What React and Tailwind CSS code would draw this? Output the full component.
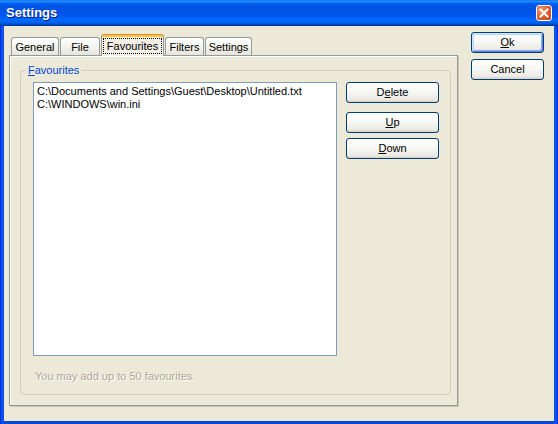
import React from 'react';

const FONT = "font-['Liberation_Sans','Noto_Sans',Arial,sans-serif]";

function XpButton({ children, isDefault }) {
  return (
    <button
      className={
        isDefault
          ? 'flex h-[21px] w-[73px] items-center justify-center rounded-[3px] border border-[#003c74] bg-[linear-gradient(180deg,#ffffff_0%,#f7f7f4_45%,#ecebe5_85%,#d8d2c6_100%)] text-[11px] leading-none text-black shadow-[inset_1px_1px_0_#cee7ff,inset_-1px_-1px_0_#6982ee,inset_2px_2px_0_#bcd4f6,inset_-2px_-2px_0_#89ade4]'
          : 'flex h-[21px] w-[73px] items-center justify-center rounded-[3px] border border-[#003c74] bg-[linear-gradient(180deg,#ffffff_0%,#f7f7f4_45%,#ecebe5_85%,#d8d2c6_100%)] text-[11px] leading-none text-black'
      }
    >
      {children}
    </button>
  );
}

function SideButton({ children }) {
  return (
    <button className="flex h-[21px] w-[93px] items-center justify-center rounded-[3px] border border-[#003c74] bg-[linear-gradient(180deg,#ffffff_0%,#f7f7f4_45%,#ecebe5_85%,#d8d2c6_100%)] text-[11px] leading-none text-black">
      {children}
    </button>
  );
}

function Tab({ label, width }) {
  return (
    <div
      className={`flex h-[18px] items-center justify-center rounded-t-[3px] border border-b-0 border-[#919b9c] bg-[linear-gradient(180deg,#ffffff_0%,#f5f4ef_50%,#e6e4da_100%)] pt-[1px] text-[11px] leading-none text-black ${width}`}
    >
      {label}
    </div>
  );
}

export default function App() {
  return (
    <div className={`${FONT} flex h-[424px] w-[558px] flex-col bg-[linear-gradient(90deg,#0019cf_0px,#0a5ffa_2px,#0847d8_4px,#0847d8_554px,#0a5ffa_556px,#0019cf_558px)] select-none`}>
      {/* title bar */}
      <div className="flex h-[26px] items-start justify-between bg-[linear-gradient(180deg,#0058ee_0%,#3593ff_4%,#288eff_6%,#127dff_8%,#036ffc_10%,#0262ee_14%,#0057e5_20%,#0054e3_24%,#0055eb_56%,#005bf5_66%,#026afe_76%,#0062ef_86%,#0052d6_92%,#0040ab_96%,#003092_100%)]">
        <div className="pl-[6px] pt-[6px] text-[13px] font-bold leading-[14px] text-white [text-shadow:1px_1px_#0a1883]">
          Settings
        </div>
        <div className="mr-[6px] mt-[5px] flex h-[16px] w-[16px] items-center justify-center rounded-[3px] border border-white bg-[radial-gradient(circle_at_30%_30%,#f0a080_0%,#e2602f_45%,#c3401b_100%)]">
          <svg width="10" height="10" viewBox="0 0 10 10">
            <path d="M1.5 1.5 L8.5 8.5 M8.5 1.5 L1.5 8.5" stroke="#fff" strokeWidth="2" strokeLinecap="square" />
          </svg>
        </div>
      </div>

      {/* client area */}
      <div className="mx-[4px] mb-[3px] flex flex-1 bg-[#ece9d8]">
        {/* tab control */}
        <div className="pl-[5px] pt-[8px]">
          <div className="flex h-[21px] items-end pl-[2px]">
            <Tab label="General" width="w-[48px]" />
            <div className="ml-[1px]">
              <Tab label="File" width="w-[40px]" />
            </div>
            <div className="relative z-10 -mb-[1px] ml-[1px] h-[22px] w-[63px] rounded-t-[3px] border border-b-0 border-[#919b9c] border-t-[#e68b2c] bg-[#f1efe6] px-[1px] pt-[3px] shadow-[inset_0_2px_0_#ffc73c]">
              <div className="flex h-[16px] items-center justify-center border border-dotted border-black text-[11px] leading-none text-black">
                Favourites
              </div>
            </div>
            <div className="ml-[1px]">
              <Tab label="Filters" width="w-[39px]" />
            </div>
            <div className="ml-[1px]">
              <Tab label="Settings" width="w-[47px]" />
            </div>
          </div>

          <div className="h-[351px] w-[449px] border border-[#919b9c] bg-[#ece9d8] pl-[10px] pt-[14px] shadow-[inset_1px_1px_0_#ffffff,1px_1px_0_#c9c6b6]">
            {/* group box */}
            <div className="relative h-[325px] w-[431px] rounded-[4px] border border-[#d0d0bf] pl-[12px] pt-[11px]">
              <div className="absolute -top-[7px] left-[5px] bg-[#ece9d8] px-[2px] text-[11px] leading-[13px] text-[#0046d5]">
                <span className="underline">F</span>avourites
              </div>
              <div className="flex items-start">
                <div className="h-[274px] w-[304px] border border-[#7f9db9] bg-white pl-[3px] pt-[2px] text-[11px] leading-[13px] text-black">
                  <div>C:\Documents and Settings\Guest\Desktop\Untitled.txt</div>
                  <div>C:\WINDOWS\win.ini</div>
                </div>
                <div className="ml-[9px] flex flex-col">
                  <SideButton>
                    D<span className="underline">e</span>lete
                  </SideButton>
                  <div className="mt-[9px]">
                    <SideButton>
                      <span className="underline">U</span>p
                    </SideButton>
                  </div>
                  <div className="mt-[5px]">
                    <SideButton>
                      <span className="underline">D</span>own
                    </SideButton>
                  </div>
                </div>
              </div>
              <div className="mt-[14px] pl-[2px] text-[11px] leading-[13px] text-[#aca899] [text-shadow:1px_1px_#ffffff]">
                You may add up to 50 favourites.
              </div>
            </div>
          </div>
        </div>

        {/* dialog buttons */}
        <div className="ml-[13px] flex flex-col gap-[6px] pt-[6px]">
          <XpButton isDefault>
            <span className="underline">O</span>k
          </XpButton>
          <XpButton>Cancel</XpButton>
        </div>
      </div>
    </div>
  );
}
